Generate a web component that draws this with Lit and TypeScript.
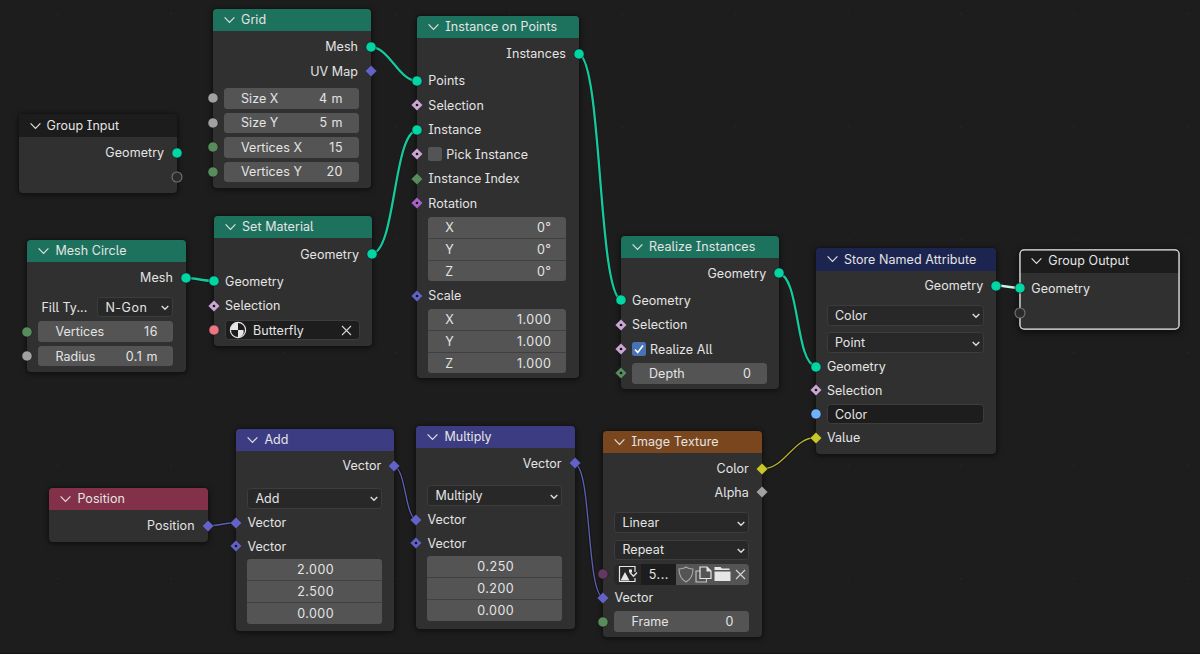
import { LitElement, html, css, svg, nothing } from "lit";
import { customElement, property } from "lit/decorators.js";
import { styleMap } from "lit/directives/style-map.js";

type Shape = "circle" | "diamond" | "field" | "empty";
interface Socket { shape: Shape; color: string; }
interface Row {
  kind: "out" | "in" | "num" | "menu" | "vec" | "check" | "material" | "string" | "image" | "fill";
  label?: string;
  value?: string;
  values?: [string, string][];
  checked?: boolean;
  gap?: number;
  socket?: Socket;
}
interface NodeData {
  title: string; x: number; y: number; w: number; h: number;
  head: string; headH: number; selected?: boolean; rows: Row[];
}

const s = (shape: Shape, color: string): Socket => ({ shape, color });
const GEO = s("circle", "#00d6a3");
const FLOAT = s("circle", "#a1a1a1");
const INT = s("circle", "#598c5c");
const BOOL = s("field", "#cca6d6");
const VEC = s("diamond", "#6363c7");
const VECF = s("field", "#6363c7");
const EMPTY = s("empty", "#6a6a6a");

const GREEN = "#1d725e";
const NODES: NodeData[] = [
  { title: "Group Input", x: 18.6, y: 114.4, w: 158.6, h: 79, head: "#1c1c1c", headH: 23, rows: [
    { kind: "out", label: "Geometry", socket: GEO, gap: 5.3 },
    { kind: "out", label: "", socket: EMPTY, gap: 3.5 } ] },
  { title: "Grid", x: 213, y: 9, w: 158, h: 179, head: GREEN, headH: 22, rows: [
    { kind: "out", label: "Mesh", socket: GEO, gap: 5.6 },
    { kind: "out", label: "UV Map", socket: VEC },
    { kind: "num", label: "Size X", value: "4 m", socket: FLOAT, gap: 6.5 },
    { kind: "num", label: "Size Y", value: "5 m", socket: FLOAT },
    { kind: "num", label: "Vertices X", value: "15", socket: INT },
    { kind: "num", label: "Vertices Y", value: "20", socket: INT } ] },
  { title: "Instance on Points", x: 417.3, y: 16, w: 161.7, h: 362.3, head: GREEN, headH: 22, rows: [
    { kind: "out", label: "Instances", socket: GEO, gap: 5.6 },
    { kind: "in", label: "Points", socket: GEO, gap: 6.5 },
    { kind: "in", label: "Selection", socket: BOOL },
    { kind: "in", label: "Instance", socket: GEO },
    { kind: "check", label: "Pick Instance", socket: BOOL },
    { kind: "in", label: "Instance Index", socket: s("diamond", "#598c5c") },
    { kind: "in", label: "Rotation", socket: s("field", "#a663c7") },
    { kind: "vec", values: [["X", "0°"], ["Y", "0°"], ["Z", "0°"]], gap: 3.25 },
    { kind: "in", label: "Scale", socket: VECF },
    { kind: "vec", values: [["X", "1.000"], ["Y", "1.000"], ["Z", "1.000"]], gap: 3 } ] },
  { title: "Mesh Circle", x: 27.4, y: 240, w: 158.5, h: 132.4, head: GREEN, headH: 22, rows: [
    { kind: "out", label: "Mesh", socket: GEO, gap: 5.6 },
    { kind: "fill", label: "Fill Ty...", value: "N-Gon", gap: 8.9 },
    { kind: "num", label: "Vertices", value: "16", socket: INT },
    { kind: "num", label: "Radius", value: "0.1 m", socket: FLOAT } ] },
  { title: "Set Material", x: 214, y: 216.2, w: 158, h: 130.2, head: GREEN, headH: 22, rows: [
    { kind: "out", label: "Geometry", socket: GEO, gap: 5.6 },
    { kind: "in", label: "Geometry", socket: GEO, gap: 6.75 },
    { kind: "in", label: "Selection", socket: BOOL, gap: 3.8 },
    { kind: "material", label: "Butterfly", socket: s("circle", "#eb7582") } ] },
  { title: "Realize Instances", x: 621, y: 235.5, w: 158.3, h: 153.5, head: GREEN, headH: 22, rows: [
    { kind: "out", label: "Geometry", socket: GEO, gap: 5.6 },
    { kind: "in", label: "Geometry", socket: GEO, gap: 6.5 },
    { kind: "in", label: "Selection", socket: BOOL },
    { kind: "check", label: "Realize All", checked: true, socket: BOOL },
    { kind: "num", label: "Depth", value: "0", socket: s("field", "#598c5c"), gap: 3.5 } ] },
  { title: "Store Named Attribute", x: 815.9, y: 248, w: 180.4, h: 205.5, head: "#1c2450", headH: 22.5, rows: [
    { kind: "out", label: "Geometry", socket: GEO, gap: 4.75 },
    { kind: "menu", label: "Color", gap: 9.25 },
    { kind: "menu", label: "Point", gap: 6.9 },
    { kind: "in", label: "Geometry", socket: GEO, gap: 3.5 },
    { kind: "in", label: "Selection", socket: BOOL, gap: 3.25 },
    { kind: "string", label: "Color", socket: s("circle", "#70b2ff"), gap: 3.2 },
    { kind: "in", label: "Value", socket: s("diamond", "#c7c729"), gap: 3.2 } ] },
  { title: "Group Output", x: 1020.3, y: 249.5, w: 159, h: 79.5, head: "#1c1c1c", headH: 23, selected: true, rows: [
    { kind: "in", label: "Geometry", socket: GEO, gap: 5.3 },
    { kind: "in", label: "", socket: EMPTY } ] },
  { title: "Position", x: 49.4, y: 488.3, w: 158.2, h: 53.7, head: "#83314a", headH: 21.7, rows: [
    { kind: "out", label: "Position", socket: VEC, gap: 5.7 } ] },
  { title: "Add", x: 236.4, y: 429, w: 158, h: 202, head: "#3c3c83", headH: 21.5, rows: [
    { kind: "out", label: "Vector", socket: VEC, gap: 5.2 },
    { kind: "menu", label: "Add", gap: 12 },
    { kind: "in", label: "Vector", socket: VEC, gap: 3.7 },
    { kind: "in", label: "Vector", socket: VECF, gap: 3.1 },
    { kind: "vec", values: [["", "2.000"], ["", "2.500"], ["", "0.000"]], gap: 2.6 } ] },
  { title: "Multiply", x: 416.4, y: 426, w: 158.2, h: 203, head: "#3c3c83", headH: 22, rows: [
    { kind: "out", label: "Vector", socket: VEC, gap: 5.2 },
    { kind: "menu", label: "Multiply", gap: 11.8 },
    { kind: "in", label: "Vector", socket: VEC, gap: 3.7 },
    { kind: "in", label: "Vector", socket: VECF, gap: 2.9 },
    { kind: "vec", values: [["", "0.250"], ["", "0.200"], ["", "0.000"]], gap: 2.9 } ] },
  { title: "Image Texture", x: 603.4, y: 431.3, w: 158.5, h: 206, head: "#79461d", headH: 21.7, rows: [
    { kind: "out", label: "Color", socket: s("diamond", "#c7c729"), gap: 5.6 },
    { kind: "out", label: "Alpha", socket: s("diamond", "#a1a1a1"), gap: 2.9 },
    { kind: "menu", label: "Linear", gap: 9.9 },
    { kind: "menu", label: "Repeat", gap: 6.8 },
    { kind: "image", label: "5...", socket: s("circle", "#633863"), gap: 4 },
    { kind: "in", label: "Vector", socket: VEC, gap: 3 },
    { kind: "num", label: "Frame", value: "0", socket: INT, gap: 3.2 } ] },
];

const LINKS = [
  { d: "M371 47C389 47 399 81 417 81", c: "geo" },
  { d: "M186 278C195 278 205 281 214 281", c: "geo" },
  { d: "M372 254C396 250 393 134 417 130", c: "geo" },
  { d: "M579 54C602 62 598 292 621 300", c: "geo" },
  { d: "M779 273.500C800 277 795 363 816 366.500", c: "geo" },
  { d: "M996 285.500C1004 285.500 1012 288 1020 288", c: "sel" },
  { d: "M207.500 526C217 526 227 522.500 236.500 522.500", c: "vec" },
  { d: "M394.500 466.500C406 470 405 517 416.500 520", c: "vec" },
  { d: "M574.500 463.500C592 467 586 594 603.500 598", c: "vec" },
  { d: "M762 469C785 469 793 437.500 816 437.500", c: "col" },
];

@customElement("node-socket")
class NodeSocket extends LitElement {
  @property() shape: Shape = "circle";
  @property() color = "#fff";
  static styles = css`
    :host { display: block; width: 14px; height: 14px; }
    svg { display: block; }
  `;
  render() {
    const st = "#1a1a1a";
    const shape =
      this.shape === "circle" ? svg`<circle cx="7" cy="7" r="5.100" fill=${this.color} stroke=${st} stroke-width=".6"/>`
      : this.shape === "empty" ? svg`<circle cx="7" cy="7" r="5" fill="#2b2b2b" stroke="#757575" stroke-width="1.100"/>`
      : svg`<path d="M7 1.200 12.800 7 7 12.800 1.200 7Z" fill=${this.color} stroke=${st} stroke-width=".5" stroke-linejoin="round"/>`;
    return html`<svg width="14" height="14" viewBox="0 0 14 14">${shape}
      ${this.shape === "field" ? svg`<circle cx="7" cy="7" r="1.350" fill="#161616"/>` : nothing}</svg>`;
  }
}

@customElement("shader-node")
class ShaderNode extends LitElement {
  @property({ attribute: false }) node!: NodeData;
  static styles = css`
    :host { display: block; }
    .node {
      box-sizing: border-box; height: 100%; border-radius: 4px; background: #303030;
      box-shadow: 0 0 0 .5px #151515, 0 1px 5px 1px rgba(0,0,0,.5);
      color: #e4e4e4; font: 12.500px/20px Inter, sans-serif; letter-spacing: .06px;
      font-feature-settings: "cv05", "cv08"; white-space: nowrap;
    }
    .selected { box-shadow: 0 0 0 .7px #f0f0f0, inset 0 0 0 .6px #f0f0f0, 0 2px 6px 2px rgba(0,0,0,.5); }
    .selected .head { box-shadow: inset 0 .6px 0 #f0f0f0, inset .6px 0 0 #f0f0f0, inset -.6px 0 0 #f0f0f0; }
    .head { display: flex; align-items: center; box-sizing: border-box; padding-left: 11px; gap: 6px; border-radius: 4px 4px 0 0; }
    .head svg { flex: none; }
    .head span { padding-top: .5px; }
    .row { position: relative; display: flex; align-items: center; height: 20.5px; padding: 0 12.500px 0 11px; }
    .row span { padding-top: 1px; }
    .out { justify-content: flex-end; padding-right: 13px; }
    node-socket { position: absolute; left: -7px; top: 3.250px; }
    .out node-socket { left: auto; right: -7px; }
    .box { display: flex; align-items: center; flex: 1; box-sizing: border-box; height: 20.5px; border-radius: 3.500px; }
    .num { background: #545454; justify-content: space-between; padding: 0 15.500px 0 17px; }
    .val { letter-spacing: .5px; }
    .menu { background: #282828; border: 1px solid #3d3d3d; justify-content: space-between; padding: 0 2px 0 7px; }
    .short { flex: none; width: 76px; margin-left: auto; letter-spacing: .5px; }
    .fill { padding-left: 14px; }
    .text { background: #1d1d1d; border: 1px solid #3d3d3d; padding: 0 7px; }
    .mat { padding: 0 7px 0 3px; gap: 6px; }
    .mat span { flex: 1; }
    .vecrow { height: 64.5px; }
    .vec { flex: 1; display: flex; flex-direction: column; gap: 1px; height: 64.5px; border-radius: 3.500px; overflow: hidden; background: #404040; }
    .cell { flex: 1; display: flex; align-items: center; justify-content: space-between; background: #545454; padding: 0 15px 0 17px; }
    .mid { justify-content: center; letter-spacing: .5px; }
    .check { width: 14px; height: 14px; border-radius: 2.500px; background: #545454; margin-right: 4px; }
    .on { background: #4772b3; }
    .check svg { display: block; }
    .img { overflow: hidden; background: #545454; }
    .browse { display: flex; align-items: center; justify-content: center; width: 27px; height: 100%; background: #282828; }
    .name { display: flex; align-items: center; justify-content: center; width: 35px; height: 100%; background: #1d1d1d; letter-spacing: .5px; }
    .btn { display: flex; flex: 1; align-items: center; justify-content: center; height: 100%; }
    .btn svg { flex: none; }
  `;

  private arrow() {
    return html`<svg width="10" height="10" viewBox="0 0 10 10"><path d="M1.700 4 5 7.200 8.300 4" fill="none" stroke="#dcdcdc" stroke-width="1.400"/></svg>`;
  }
  private cross() {
    return html`<svg width="11" height="11" viewBox="0 0 11 11"><path d="M1 1 10 10M10 1 1 10" fill="none" stroke="#d4d4d4" stroke-width="1.100"/></svg>`;
  }
  private content(r: Row) {
    switch (r.kind) {
      case "num": return html`<div class="box num"><span>${r.label}</span><span class="val">${r.value}</span></div>`;
      case "menu": return html`<div class="box menu"><span>${r.label}</span>${this.arrow()}</div>`;
      case "fill": return html`<span>${r.label}</span><div class="box menu short"><span>${r.value}</span>${this.arrow()}</div>`;
      case "string": return html`<div class="box text"><span>${r.label}</span></div>`;
      case "check": return html`<div class="check ${r.checked ? "on" : ""}">${r.checked
        ? html`<svg width="14" height="14" viewBox="0 0 14 14"><path d="M3 7.500 5.700 10.500 11 3.500" fill="none" stroke="#fff" stroke-width="1.600"/></svg>` : nothing}</div><span>${r.label}</span>`;
      case "material": return html`<div class="box text mat">
        <svg width="18" height="18" viewBox="0 0 18 18"><circle cx="9" cy="9" r="7.600" fill="none" stroke="#e6e6e6" stroke-width="1.200"/>
          <path d="M9 1.400V9H1.400A7.600 7.600 0 0 1 9 1.400ZM9 9H14.500A6 6 0 0 1 9 16.500Z" fill="#e6e6e6"/></svg>
        <span>${r.label}</span>${this.cross()}</div>`;
      case "vec": return html`<div class="vec">${r.values!.map(([k, v]) => k
        ? html`<div class="cell"><span>${k}</span><span class="val">${v}</span></div>`
        : html`<div class="cell mid"><span>${v}</span></div>`)}</div>`;
      case "image": return html`<div class="box img">
        <div class="browse"><svg width="20" height="18" viewBox="0 0 20 18"><path d="M17 7V1.500H1.500V16.500H17V13" fill="none" stroke="#e6e6e6" stroke-width="1.200"/>
          <path d="M2.500 15.500 7 7 11.500 15.500ZM11 4.500h3v3h-3Z" fill="#e6e6e6"/><path d="M12 7.500 15.500 11.300 19 7.500" fill="none" stroke="#e6e6e6" stroke-width="1.300"/></svg></div>
        <div class="name"><span>${r.label}</span></div>
        <div class="btn"><svg width="16" height="17" viewBox="0 0 16 17"><path d="M8 1C6 2.500 3.500 3 1 3C1 9 2.500 13 8 16C13.500 13 15 9 15 3C12.500 3 10 2.500 8 1Z" fill="none" stroke="#a8a8a8" stroke-width="1.100"/></svg></div>
        <div class="btn"><svg width="17" height="17" viewBox="0 0 17 17"><path d="M5 5H1V16H11.500V13" fill="none" stroke="#c4c4c4" stroke-width="1.100"/><path d="M5 1H12L16 5V12.500H5Z" fill="none" stroke="#e6e6e6" stroke-width="1.200"/><path d="M11.500 1V5.500H16Z" fill="#e6e6e6"/></svg></div>
        <div class="btn"><svg width="17" height="16" viewBox="0 0 17 16"><path d="M.5 4V1H6.500L8 2.500H15.500V4ZM.5 5.500H16.500V15H.5Z" fill="#e6e6e6"/></svg></div>
        <div class="btn">${this.cross()}</div></div>`;
      default: return html`<span>${r.label}</span>`;
    }
  }
  render() {
    const n = this.node;
    return html`<div class="node ${n.selected ? "selected" : ""}">
      <div class="head" style=${styleMap({ height: n.headH + "px", background: n.head })}>
        <svg width="11" height="8" viewBox="0 0 11 8"><path d="M.6 1.300 5.500 6.300 10.400 1.300" fill="none" stroke="#e0e0e0" stroke-width="1.200"/></svg>
        <span>${n.title}</span></div>
      ${n.rows.map((r) => html`<div class="row ${r.kind === "out" ? "out" : r.kind === "vec" ? "vecrow" : r.kind === "fill" ? "fill" : ""}"
        style=${styleMap({ marginTop: (r.gap ?? 4) + "px" })}>
        ${this.content(r)}
        ${r.socket ? html`<node-socket .shape=${r.socket.shape} .color=${r.socket.color}></node-socket>` : nothing}
      </div>`)}
    </div>`;
  }
}

@customElement("app-root")
class AppRoot extends LitElement {
  static styles = css`
    :host { display: block; position: relative; box-sizing: border-box; width: 1200px; height: 654px; overflow: hidden; background: #1d1d1d; border-bottom: 1px solid #161315; }
    .links { position: absolute; left: 0; top: 0; }
    .geo, .sel, .vec, .col { fill: none; }
    .edge { fill: none; stroke: #141414; stroke-width: 3.500px; }
    .geo { stroke: #16c99c; stroke-width: 2.300px; }
    .sel { stroke: #c9f3e6; stroke-width: 2.500px; }
    .vec { stroke: #5f5fb8; stroke-width: 1.300px; }
    .col { stroke: #b3b32b; stroke-width: 1.300px; }
    shader-node { position: absolute; }
  `;
  render() {
    return html`
      <svg class="links" width="1200" height="654">
        <defs><pattern id="dots" x="57" y="13" width="112.930" height="113" patternUnits="userSpaceOnUse"><rect width="1.500" height="1.500" fill="#272727"/></pattern></defs>
        <rect width="1200" height="654" fill="url(#dots)"/>
        ${LINKS.map((l) => svg`<path class="edge" d=${l.d}/><path class=${l.c} d=${l.d}/>`)}
      </svg>
      ${NODES.map((n) => html`<shader-node .node=${n}
        style=${styleMap({ left: n.x + "px", top: n.y + "px", width: n.w + "px", height: n.h + "px" })}></shader-node>`)}
    `;
  }
}
